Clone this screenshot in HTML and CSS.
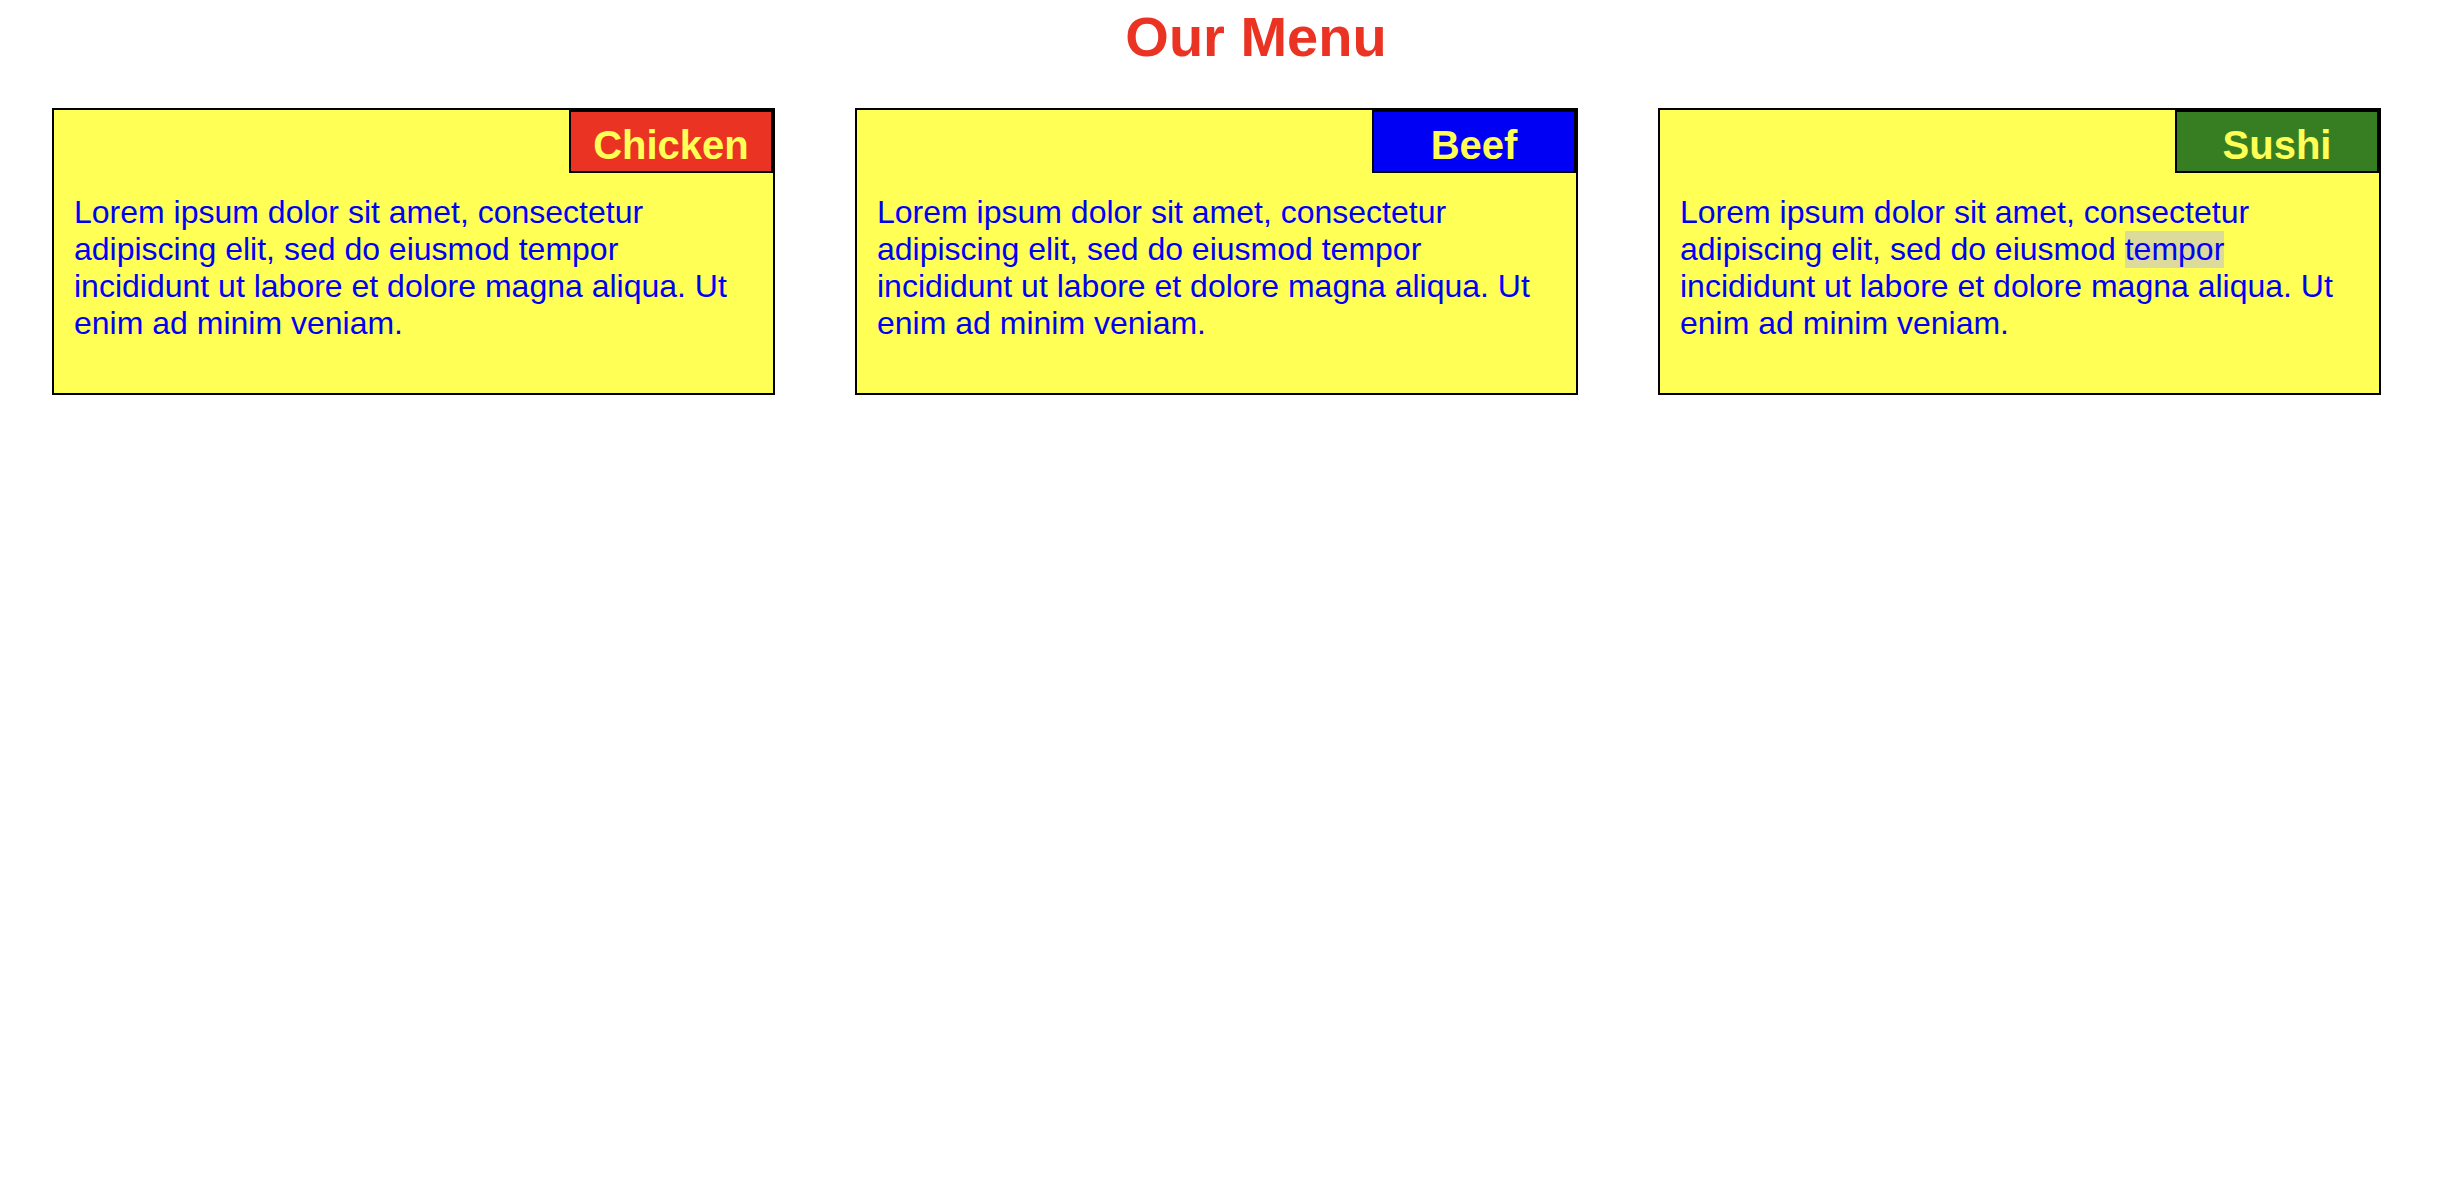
FILE: index.html
```html
<!DOCTYPE html>
<html lang="en">
<head>
<meta charset="utf-8">
<title>Our Menu</title>
<link rel="stylesheet" href="styles.css">
</head>
<body>
<h1 class="title">Our Menu</h1>
<div class="cards">
  <div class="card">
    <div class="badge badge-chicken">Chicken</div>
    <p class="desc">Lorem ipsum dolor sit amet, consectetur adipiscing elit, sed do eiusmod tempor incididunt ut labore et dolore magna aliqua. Ut enim ad minim veniam.</p>
  </div>
  <div class="card">
    <div class="badge badge-beef">Beef</div>
    <p class="desc">Lorem ipsum dolor sit amet, consectetur adipiscing elit, sed do eiusmod tempor incididunt ut labore et dolore magna aliqua. Ut enim ad minim veniam.</p>
  </div>
  <div class="card">
    <div class="badge badge-sushi">Sushi</div>
    <p class="desc">Lorem ipsum dolor sit amet, consectetur adipiscing elit, sed do eiusmod <span class="hl">tempor</span> incididunt ut labore et dolore magna aliqua. Ut enim ad minim veniam.</p>
  </div>
</div>
</body>
</html>
```
FILE: styles.css
```css
html, body {
  margin: 0;
  padding: 0;
  background: #ffffff;
  font-family: "Liberation Sans", Arial, Helvetica, sans-serif;
}

.title {
  margin: 5px 0 0 0;
  padding-left: 70px;
  text-align: center;
  font-size: 56px;
  line-height: 64px;
  font-weight: bold;
  color: #ea3323;
}

.cards {
  display: flex;
  gap: 80px;
  padding-left: 52px;
  margin-top: 39px;
}

.card {
  box-sizing: border-box;
  width: 723px;
  border: 2px solid #000000;
  background: #ffff55;
  padding-bottom: 20px;
}

.badge {
  box-sizing: border-box;
  width: 204px;
  height: 63px;
  margin-left: auto;
  border: 2px solid #000000;
  padding-top: 10px;
  text-align: center;
  font-size: 40px;
  line-height: 46px;
  font-weight: bold;
  color: #ffff55;
}

.badge-chicken { background: #ea3323; }
.badge-beef { background: #0000f5; }
.badge-sushi { background: #377e22; }

.desc {
  margin: 21px 20px 31px 20px;
  font-size: 32px;
  line-height: 37px;
  color: #0000f5;
}

.hl {
  display: inline-block;
  background: #dddb9b;
}
```
